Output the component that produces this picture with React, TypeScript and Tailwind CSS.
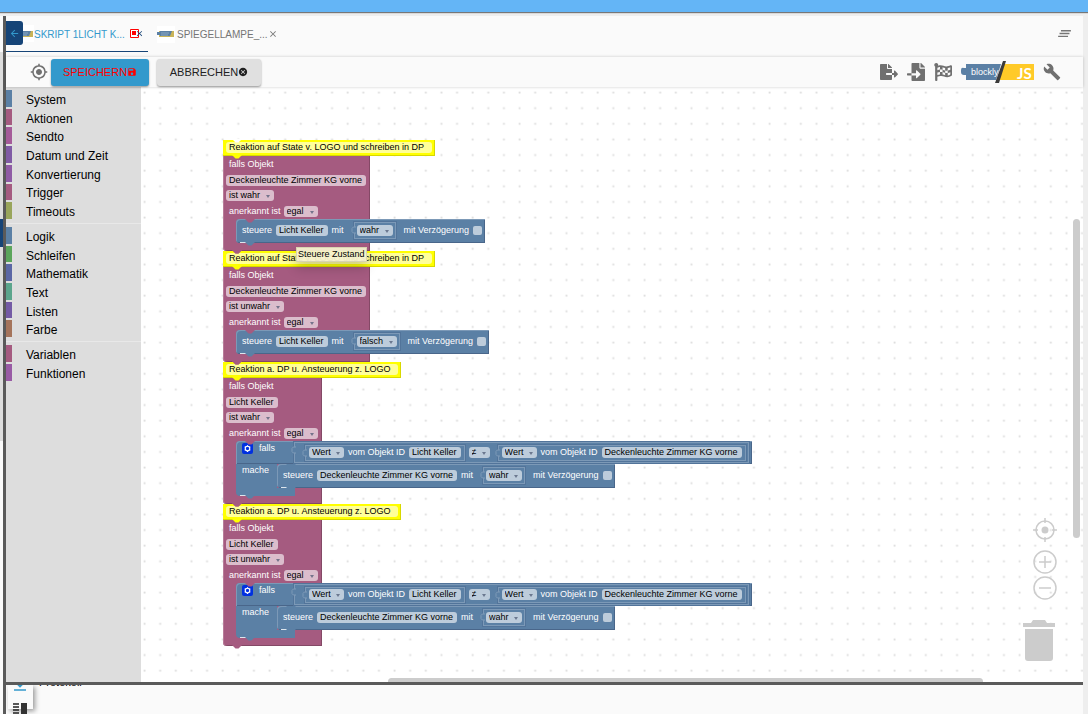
import type { ReactNode } from 'react'
import clsx from 'clsx'
import {
  MdArrowBack,
  MdBuild,
  MdCancel,
  MdClearAll,
  MdClose,
  MdGpsFixed,
  MdSave,
  MdVerticalAlignBottom,
} from 'react-icons/md'
import { FaFileExport, FaFileImport, FaFlagCheckered } from 'react-icons/fa'

const categoryGroups = [
  {
    height: 'h-[131px]',
    items: [
      { name: 'System', color: 'bg-[#5b80a5]' },
      { name: 'Aktionen', color: 'bg-[#a55b80]' },
      { name: 'Sendto', color: 'bg-[#a55b99]' },
      { name: 'Datum und Zeit', color: 'bg-[#805ba5]' },
      { name: 'Konvertierung', color: 'bg-[#8f5ba5]' },
      { name: 'Trigger', color: 'bg-[#a55b80]' },
      { name: 'Timeouts', color: 'bg-[#99a55b]' },
    ],
  },
  {
    height: 'h-[112px]',
    items: [
      { name: 'Logik', color: 'bg-[#5b80a5]' },
      { name: 'Schleifen', color: 'bg-[#5ba55b]' },
      { name: 'Mathematik', color: 'bg-[#5b67a5]' },
      { name: 'Text', color: 'bg-[#5ba58c]' },
      { name: 'Listen', color: 'bg-[#745ba5]' },
      { name: 'Farbe', color: 'bg-[#a5745b]' },
    ],
  },
  {
    height: 'h-[38px]',
    items: [
      { name: 'Variablen', color: 'bg-[#a55b80]' },
      { name: 'Funktionen', color: 'bg-[#995ba5]' },
    ],
  },
]

function BlocklyThumb() {
  return (
    <span className="flex h-[17px] w-[18px] shrink-0 items-center bg-white">
      <svg viewBox="0 0 18 8" className="h-2 w-[18px]">
        <path d="M2 1h15v6H2z" fill="#c9b458" />
        <path d="M0 2h3V1h12l-2 5H3V5H0z" fill="#5b80a5" />
        <path d="M4 3h8M4 5h7" stroke="#8ba7c1" strokeWidth="1" />
      </svg>
    </span>
  )
}

function TabBar() {
  return (
    <div className="flex h-[41px] shrink-0 items-start bg-[#fafafa]">
      <div className="relative flex h-9 w-[142px] items-center border-b border-[#164477] pl-[10px] text-[#3399cc]">
        <BlocklyThumb />
        <a href="#script1" className="pt-px text-[10px]">SKRIPT 1LICHT K...</a>
        <svg viewBox="0 0 9 9" className="ml-[5px] size-[9px] shrink-0">
          <path d="M.5.5h8v8h-8z" fill="#fff" stroke="#f00" />
          <path d="M2 2h4v4H2z" fill="#f00" />
        </svg>
        <button aria-label="Tab schließen" className="-ml-1 text-[#164477]">
          <MdClose size={9} />
        </button>
        <button
          aria-label="Zurück"
          className="absolute top-[5px] left-0 flex h-6 w-[17px] items-center justify-center rounded-r-[3px] bg-[#164477] text-[#3399cc]"
        >
          <MdArrowBack size={11} />
        </button>
      </div>
      <div className="ml-[9px] flex h-9 items-center text-[#757575]">
        <BlocklyThumb />
        <a href="#script2" className="pt-px pl-0.5 text-[10px]">SPIEGELLAMPE_...</a>
        <button aria-label="Tab schließen">
          <MdClose size={10} />
        </button>
      </div>
      <button aria-label="Alle schließen" className="mt-[9px] mr-2.5 ml-auto text-[#757575]">
        <MdClearAll size={17} />
      </button>
    </div>
  )
}

function BlocklyJsLogo() {
  return (
    <svg viewBox="0 0 73 22" className="h-[22px] w-[73px]">
      <path d="M5 3h35l-5 16H5v-5H3q-3 0-3-3V9q0-3 3-2h2z" fill="#5b80a5" />
      <path d="M43 3h30v16H37z" fill="#ffca28" />
      <text x="10" y="14" fontSize="9" fontFamily="Liberation Sans, sans-serif" fill="#fff">blockly</text>
      <path d="M42 0h3L38 22h-4z" fill="#3b3b3b" />
      <text x="56" y="18" fontSize="15" fontWeight="bold" fontFamily="Lato, sans-serif" fill="#fff">JS</text>
    </svg>
  )
}

function Toolbar() {
  return (
    <div className="relative z-10 flex h-[30px] shrink-0 items-center bg-[#fafafa] pr-[22px] pl-6 shadow-[0_0_3px_rgba(0,0,0,0.2)]">
      <button aria-label="Block finden" className="text-[#707070]">
        <MdGpsFixed size={18} />
      </button>
      <button className="ml-[3px] flex h-[27px] w-[98px] items-center justify-center rounded-[3px] bg-[#3399cc] text-[11px] text-[#f00] shadow-[0_1px_2px_rgba(0,0,0,0.4)]">
        SPEICHERN
        <MdSave size={10} />
      </button>
      <button className="ml-2 flex h-[27px] w-[104px] items-center justify-center rounded-[3px] bg-[#e0e0e0] text-[11px] text-[#212121] shadow-[0_1px_2px_rgba(0,0,0,0.4)]">
        ABBRECHEN
        <MdCancel size={10} />
      </button>
      <div className="ml-auto flex items-center gap-[9px] text-[#707070]">
        <button aria-label="Exportieren"><FaFileExport size={18} /></button>
        <button aria-label="Importieren"><FaFileImport size={18} /></button>
        <button aria-label="Blöcke prüfen"><FaFlagCheckered size={18} /></button>
        <button aria-label="Blockly oder JS"><BlocklyJsLogo /></button>
        <button aria-label="Einstellungen"><MdBuild size={18} /></button>
      </div>
    </div>
  )
}

function Toolbox() {
  return (
    <nav className="w-[135px] shrink-0 bg-[#ddd] pt-[3px]">
      {categoryGroups.map((group, i) => (
        <div key={i} className={clsx(i > 0 && 'mt-0.5 border-t border-[#e8e8e8] pt-[3px]')}>
          <ul className={clsx('grid auto-rows-fr', group.height)}>
            {group.items.map((item) => (
              <li key={item.name} className="flex pb-0.5">
                <span className={clsx('w-1.5', item.color)} />
                <a href={`#${item.name}`} className="flex items-center pt-[3px] pl-[14px] text-xs leading-4 text-black">
                  {item.name}
                </a>
              </li>
            ))}
          </ul>
        </div>
      ))}
    </nav>
  )
}

// puzzle tab that hangs from a block into the one below
function Notch({ className }: { className: string }) {
  return (
    <svg viewBox="0 0 10 4" className={clsx('absolute left-[9px] z-10 h-1 w-2.5', className)}>
      <path d="M0 0h10L6.500 3.500h-3z" fill="currentColor" />
    </svg>
  )
}

function Select({ value }: { value: string }) {
  return (
    <span className="relative flex">
      <select
        aria-label={value}
        className="h-[11px] appearance-none rounded-[3px] bg-white/60 pr-[13px] pl-[3px] text-[9px] leading-[11px] text-black"
      >
        <option>{value}</option>
      </select>
      <svg viewBox="0 0 4 3" className="pointer-events-none absolute top-[5px] right-1 h-[3px] w-1 opacity-70">
        <path d="M0 0h4L2 3z" fill="#4a5570" />
      </svg>
    </span>
  )
}

function ObjectField({ name }: { name: string }) {
  return (
    <button className="h-[11px] rounded-[3px] bg-white/60 pr-1 pl-[3px] text-[9px] leading-[11px] whitespace-nowrap text-black">
      {name}
    </button>
  )
}

function Value({ children, className }: { children: ReactNode; className?: string }) {
  return (
    <div className={clsx('relative flex items-center gap-1 border border-[#7c99b7] bg-[#5b80a5] outline outline-[#52749a]', className)}>
      <svg viewBox="0 0 5 8" className="absolute top-[3px] -left-1 h-2 w-[5px]">
        <path d="M5 .5V1Q1 .5 1 2.500v3Q1 7.500 5 7v.5" fill="#5b80a5" stroke="#7c99b7" />
      </svg>
      {children}
    </div>
  )
}

const blueEdge = 'shadow-[inset_1px_1px_0_#7c99b7,inset_-1px_-1px_0_#49668a]'

function ControlBlock({ target, value, notch }: { target: string; value: string; notch: string }) {
  return (
    <div className={clsx('relative flex h-6 items-center gap-1 rounded-l-[4px] bg-[#5b80a5] pr-[3px] pb-0.5 pl-1.5', blueEdge)}>
      <Notch className={clsx('top-0', notch)} />
      <span>steuere</span>
      <ObjectField name={target} />
      <span>mit</span>
      <Value className="mt-px ml-1.5 h-[17px] px-0.5">
        <Select value={value} />
      </Value>
      <label className="ml-1 flex items-center gap-1">
        mit Verzögerung
        <input type="checkbox" className="size-[9px] appearance-none rounded-[2px] bg-white/60" />
      </label>
      <span className="absolute bottom-0 left-1 h-px w-2 bg-[#dde6ee]" />
      <Notch className="-bottom-[3px] text-[#5b80a5]" />
    </div>
  )
}

function ObjectValue({ name, className }: { name: string; className?: string }) {
  return (
    <Value className={clsx('h-4 px-[3px]', className)}>
      <Select value="Wert" />
      <span>vom Objekt ID</span>
      <ObjectField name={name} />
    </Value>
  )
}

function IfBlock() {
  return (
    <div className="relative h-[55px]">
      <Notch className="top-0 text-[#a55b80]" />
      <div className={clsx('flex h-[23px] items-center rounded-tl-[4px] bg-[#5b80a5] pr-[3px] pl-1.5', blueEdge)}>
        <button aria-label="Bedingungen ändern" className="mb-2 rounded-[2px] bg-[#0030e0] p-px">
          <svg viewBox="0 0 16 16" className="size-[9px]">
            <circle cx="8" cy="8" r="4" fill="none" stroke="#fff" strokeWidth="2" />
            <path d="M8 2v2M8 12v2M3 5l2 1M11 10l2 1M3 11l2-1M11 6l2-1" stroke="#fff" strokeWidth="2" />
          </svg>
        </button>
        <span className="mb-2 ml-1.5">falls</span>
        <Value className="ml-[19px] h-[21px] px-2.5 pr-0.5">
          <ObjectValue name="Licht Keller" />
          <Select value="≠" />
          <ObjectValue name="Deckenleuchte Zimmer KG vorne" className="ml-1" />
        </Value>
      </div>
      <div className="flex h-6">
        <div className="w-[41px] bg-[#5b80a5] pl-1.5 leading-[13px]">mache</div>
        <ControlBlock target="Deckenleuchte Zimmer KG vorne" value="wahr" notch="text-[#5b80a5]" />
      </div>
      <div className="h-2 w-[59px] rounded-bl-[4px] bg-[#5b80a5]" />
      <span className="absolute bottom-0 left-1 h-px w-2 bg-[#dde6ee]" />
      <Notch className="-bottom-[3px] text-[#5b80a5]" />
    </div>
  )
}

function Comment({ text, previous }: { text: string; previous: string }) {
  return (
    <div className="relative flex h-4 w-max items-center border-r border-b border-[#d8d800] bg-[#ff0] pr-0.5 pl-[3px]">
      <Notch className={clsx('-top-px', previous)} />
      <button className="h-[11px] rounded-[3px] bg-white/60 pr-2 pl-[3px] leading-[11px] text-black">{text}</button>
      <Notch className="-bottom-1 text-[#ff0]" />
    </div>
  )
}

function TriggerBlock({ object, state, children }: { object: string; state: string; children: ReactNode }) {
  return (
    <div className="relative w-max rounded-bl-[4px] bg-[#a55b80] shadow-[inset_1px_0_0_#b77c99,inset_-1px_-1px_0_#844966]">
      <div className="flex h-[63px] flex-col pr-1 pl-[3px]">
        <div className="flex h-4 items-center pl-[3px]">falls Objekt</div>
        <div className="flex h-4 items-center">
          <ObjectField name={object} />
        </div>
        <div className="flex h-[15px] items-center">
          <Select value={state} />
        </div>
        <label className="flex h-4 items-center gap-[3px] pl-[3px]">
          anerkannt ist
          <Select value="egal" />
        </label>
      </div>
      <div className="flex w-0 pl-[13px]">
        <div className="w-max">{children}</div>
      </div>
      <div className="h-2" />
      <Notch className="-bottom-[3px] text-[#a55b80]" />
    </div>
  )
}

function Script() {
  return (
    <div className="absolute top-[53px] left-[82px] text-[9px] leading-[11px] whitespace-nowrap text-white">
      <Comment text="Reaktion auf State v. LOGO und schreiben in DP" previous="text-white" />
      <TriggerBlock object="Deckenleuchte Zimmer KG vorne" state="ist wahr">
        <ControlBlock target="Licht Keller" value="wahr" notch="text-[#a55b80]" />
      </TriggerBlock>
      <Comment text="Reaktion auf State v. LOGO und schreiben in DP" previous="text-[#a55b80]" />
      <TriggerBlock object="Deckenleuchte Zimmer KG vorne" state="ist unwahr">
        <ControlBlock target="Licht Keller" value="falsch" notch="text-[#a55b80]" />
      </TriggerBlock>
      <Comment text="Reaktion a. DP u. Ansteuerung z. LOGO" previous="text-[#a55b80]" />
      <TriggerBlock object="Licht Keller" state="ist wahr">
        <IfBlock />
      </TriggerBlock>
      <Comment text="Reaktion a. DP u. Ansteuerung z. LOGO" previous="text-[#a55b80]" />
      <TriggerBlock object="Licht Keller" state="ist unwahr">
        <IfBlock />
      </TriggerBlock>
    </div>
  )
}

function Workspace() {
  return (
    <div className="relative min-w-0 flex-1 overflow-hidden bg-white">
      <svg className="absolute inset-0 h-full w-full">
        <defs>
          <pattern id="dots" width="25" height="25" patternUnits="userSpaceOnUse" patternTransform="translate(2 4) scale(0.625)">
            <path d="M1 2.500h3" stroke="#ddd" strokeWidth="3" />
          </pattern>
        </defs>
        <rect width="100%" height="100%" fill="url(#dots)" />
      </svg>
      <Script />
      <div className="absolute top-40 left-[155px] z-20 h-[15px] border border-[#d8d4b0] bg-[#f5f1cd]/95 px-px text-[9px] leading-[13px] whitespace-nowrap text-black shadow-[0_6px_12px_rgba(0,0,0,0.2)]">
        Steuere Zustand
      </div>
      <div className="absolute right-7 bottom-[21px] flex w-8 flex-col items-center text-[#ccc]">
        <button aria-label="Zentrieren" className="ml-3">
          <svg viewBox="0 0 24 24" className="size-6" fill="none" stroke="currentColor">
            <circle cx="12" cy="12" r="9" strokeWidth="1.500" />
            <circle cx="12" cy="12" r="3.500" fill="currentColor" stroke="none" />
            <path d="M12 0v5M12 19v5M0 12h5M19 12h5" strokeWidth="1.500" />
          </svg>
        </button>
        <button aria-label="Vergrößern" className="mt-2 ml-3">
          <svg viewBox="0 0 24 24" className="size-6" fill="none" stroke="currentColor" strokeWidth="1.500">
            <circle cx="12" cy="12" r="11" />
            <path d="M12 6v12M6 12h12" />
          </svg>
        </button>
        <button aria-label="Verkleinern" className="mt-0.5 ml-3">
          <svg viewBox="0 0 24 24" className="size-6" fill="none" stroke="currentColor" strokeWidth="1.500">
            <circle cx="12" cy="12" r="11" />
            <path d="M6 12h12" />
          </svg>
        </button>
        <svg viewBox="0 0 32 41" className="mt-5 h-[41px] w-8" fill="currentColor">
          <path d="M0 3h8l2-3h12l2 3h8v4H0z" />
          <path d="M2 9h28v29q0 3-3 3H5q-3 0-3-3z" />
        </svg>
      </div>
      <div className="absolute top-[132px] right-[3px] h-[319px] w-[7px] rounded-full bg-[#ccc]" />
      <div className="absolute right-[100px] -bottom-[3px] left-[247px] h-[7px] rounded-full bg-[#ccc]" />
    </div>
  )
}

function Footer() {
  return (
    <div className="flex h-[29px] shrink-0 overflow-hidden bg-[#fafafa]">
      <div className="relative ml-0.5 h-6 w-[25px] shrink-0 shadow-[2px_2px_5px_rgba(0,0,0,0.4)]">
        <button aria-label="Zum Ende" className="absolute -top-[10px] left-[3px] text-[#3399cc]">
          <MdVerticalAlignBottom size={18} />
        </button>
        <svg viewBox="0 0 14 12" className="absolute top-[18px] left-[5px] h-3 w-3.5">
          <path d="M0 1h6M0 4h6M0 7h6M0 10h6" stroke="#222" strokeWidth="1.500" />
          <path d="M8 0h6v12H8z" fill="#333" />
        </svg>
      </div>
      <span className="-mt-2 pl-1.5 text-[11px] leading-[11px] text-black">Protokoll</span>
    </div>
  )
}

export default function App() {
  return (
    <div className="flex h-screen flex-col overflow-hidden bg-[#eee] font-['Liberation_Sans',Arial,sans-serif]">
      <header className="h-3 shrink-0 bg-[#64b5f6] shadow-[0_1px_1px_rgba(0,0,0,0.5)]" />
      <div className="mt-1 flex min-h-0 flex-1 pr-[5px]">
        <div className="flex w-[3px] shrink-0 flex-col">
          <div className="h-9 bg-[#fafafa]" />
          <div className="h-[167px] bg-[#ddd]" />
          <div className="h-7 bg-[#164477]" />
          <div className="h-[194px] bg-[#ddd]" />
          <div className="flex-1 bg-[#fafafa]" />
        </div>
        <main className="flex min-w-0 flex-1 flex-col border-l-[3px] border-[#5a5a5a]">
          <TabBar />
          <Toolbar />
          <div className="flex min-h-0 flex-1 border-b-[3px] border-[#5a5a5a]">
            <Toolbox />
            <Workspace />
          </div>
          <Footer />
        </main>
      </div>
    </div>
  )
}
